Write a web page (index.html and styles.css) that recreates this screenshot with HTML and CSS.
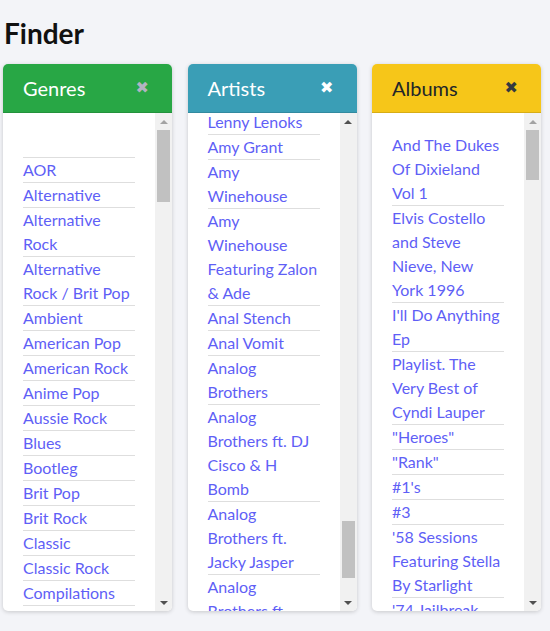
FILE: index.html
```html
<!DOCTYPE html>
<html lang="en">
<head>
<meta charset="utf-8">
<title>Finder</title>
<link rel="stylesheet" href="styles.css">
</head>
<body>
<main class="page">
  <h1 class="title">Finder</h1>
  <div class="columns">
    <section class="panel">
      <header class="panel-head head-green">
        <h2 class="panel-title">Genres</h2>
        <button class="close close-gray" type="button">✖</button>
      </header>
      <div class="panel-body">
        <ul class="list" id="genres">
          <li class="item"><a class="link" href="#"></a></li>
          <li class="item"><a class="link" href="#">AOR</a></li>
          <li class="item"><a class="link" href="#">Alternative</a></li>
          <li class="item"><a class="link" href="#">Alternative Rock</a></li>
          <li class="item"><a class="link" href="#">Alternative Rock / Brit Pop</a></li>
          <li class="item"><a class="link" href="#">Ambient</a></li>
          <li class="item"><a class="link" href="#">American Pop</a></li>
          <li class="item"><a class="link" href="#">American Rock</a></li>
          <li class="item"><a class="link" href="#">Anime Pop</a></li>
          <li class="item"><a class="link" href="#">Aussie Rock</a></li>
          <li class="item"><a class="link" href="#">Blues</a></li>
          <li class="item"><a class="link" href="#">Bootleg</a></li>
          <li class="item"><a class="link" href="#">Brit Pop</a></li>
          <li class="item"><a class="link" href="#">Brit Rock</a></li>
          <li class="item"><a class="link" href="#">Classic</a></li>
          <li class="item"><a class="link" href="#">Classic Rock</a></li>
          <li class="item"><a class="link" href="#">Compilations</a></li>
          <li class="item"><a class="link" href="#">Country</a></li>
        </ul>
        <div class="scrollbar">
          <span class="sb-btn sb-up sb-off"></span>
          <div class="sb-track"><div class="sb-thumb" style="height:72px"></div></div>
          <span class="sb-btn sb-down"></span>
        </div>
      </div>
    </section>
    <section class="panel">
      <header class="panel-head head-teal">
        <h2 class="panel-title">Artists</h2>
        <button class="close close-white" type="button">✖</button>
      </header>
      <div class="panel-body">
        <ul class="list" id="artists">
          <li class="item" id="anchor"><a class="link" href="#">Lenny Lenoks</a></li>
          <li class="item"><a class="link" href="#">Amy Grant</a></li>
          <li class="item"><a class="link" href="#">Amy Winehouse</a></li>
          <li class="item"><a class="link" href="#">Amy Winehouse Featuring Zalon &amp; Ade</a></li>
          <li class="item"><a class="link" href="#">Anal Stench</a></li>
          <li class="item"><a class="link" href="#">Anal Vomit</a></li>
          <li class="item"><a class="link" href="#">Analog Brothers</a></li>
          <li class="item"><a class="link" href="#">Analog Brothers ft. DJ Cisco &amp; H Bomb</a></li>
          <li class="item"><a class="link" href="#">Analog Brothers ft. Jacky Jasper</a></li>
          <li class="item"><a class="link" href="#">Analog Brothers ft. Kool Keith</a></li>
        </ul>
        <div class="scrollbar">
          <span class="sb-btn sb-up"></span>
          <div class="sb-track"><div class="sb-thumb" style="height:57px;margin-top:391px"></div></div>
          <span class="sb-btn sb-down"></span>
        </div>
      </div>
    </section>
    <section class="panel">
      <header class="panel-head head-yellow">
        <h2 class="panel-title">Albums</h2>
        <button class="close close-dark" type="button">✖</button>
      </header>
      <div class="panel-body">
        <ul class="list" id="albums">
          <li class="item"><a class="link" href="#">And The Dukes Of Dixieland Vol 1</a></li>
          <li class="item"><a class="link" href="#">Elvis Costello and Steve Nieve, New York 1996</a></li>
          <li class="item"><a class="link" href="#">I'll Do Anything Ep</a></li>
          <li class="item"><a class="link" href="#">Playlist. The Very Best of Cyndi Lauper</a></li>
          <li class="item"><a class="link" href="#">"Heroes"</a></li>
          <li class="item"><a class="link" href="#">"Rank"</a></li>
          <li class="item"><a class="link" href="#">#1's</a></li>
          <li class="item"><a class="link" href="#">#3</a></li>
          <li class="item"><a class="link" href="#">'58 Sessions Featuring Stella By Starlight</a></li>
          <li class="item"><a class="link" href="#">'74 Jailbreak</a></li>
        </ul>
        <div class="scrollbar">
          <span class="sb-btn sb-up sb-off"></span>
          <div class="sb-track"><div class="sb-thumb" style="height:50px"></div></div>
          <span class="sb-btn sb-down"></span>
        </div>
      </div>
    </section>
  </div>
</main>
<script src="script.js"></script>
</body>
</html>
```
FILE: styles.css
```css
* { box-sizing: border-box; }

html, body {
  margin: 0;
  background: #f3f4f8;
}

body {
  font-family: Lato, "Liberation Sans", sans-serif;
  font-size: 16px;
  line-height: 24px;
  color: #212529;
}

.page {
  padding: 0 3px 20px;
}

.title {
  margin: 16px 0 14px 1px;
  font-size: 28px;
  line-height: 34px;
  font-weight: 700;
  color: #111;
}

.columns {
  display: grid;
  grid-template-columns: repeat(3, 169px);
  column-gap: 15.5px;
}

.panel {
  background: #fff;
  border-radius: 5px;
  overflow: hidden;
  box-shadow: 0 1px 4px rgba(0, 0, 0, 0.18);
}

.panel-head {
  display: flex;
  align-items: center;
  justify-content: space-between;
  padding: 12px 23px 12px 20px;
  border-bottom: 1px solid rgba(0, 0, 0, 0.125);
}

.head-green { background: #28a745; color: #fff; }
.head-teal { background: #3a9eb6; color: #fff; }
.head-yellow { background: #f6c619; color: #212529; }

.panel-title {
  margin: 0;
  font-size: 20px;
  line-height: 24px;
  font-weight: 400;
}

.close {
  background: none;
  border: 0;
  padding: 0;
  font-family: "DejaVu Sans", sans-serif;
  font-size: 16px;
  line-height: 24px;
  cursor: pointer;
}

.close-gray { color: #b3b3c2; }
.close-white { color: #fff; }
.close-dark { color: #343a40; }

.panel-body {
  display: flex;
  height: 498px;
}

.list {
  flex: 1;
  min-width: 0;
  list-style: none;
  margin: 0;
  padding: 20px 20px 0;
  overflow-y: hidden;
}

.item {
  border-bottom: 1px solid #dedede;
}

.link {
  display: block;
  min-height: 24px;
  color: #5f5ff6;
  text-decoration: none;
}

.scrollbar {
  width: 17px;
  flex: none;
  display: flex;
  flex-direction: column;
  background: #f1f1f1;
}

.sb-btn {
  height: 17px;
  flex: none;
  display: flex;
  align-items: center;
  justify-content: center;
}

.sb-btn::before {
  content: "";
  width: 0;
  height: 0;
  border-left: 4px solid transparent;
  border-right: 4px solid transparent;
}

.sb-up::before { border-bottom: 4px solid #505050; }
.sb-down::before { border-top: 4px solid #505050; }
.sb-up.sb-off::before { border-bottom-color: #a3a3a3; }
.sb-down.sb-off::before { border-top-color: #a3a3a3; }

.sb-track {
  flex: 1;
  display: flex;
  flex-direction: column;
}

.sb-thumb {
  flex: none;
  margin-left: 2px;
  margin-right: 2px;
  background: #c1c1c1;
}
```
FILE: script.js
```js
var artists = document.getElementById("artists");
var anchor = document.getElementById("anchor");
artists.scrollTop = anchor.offsetTop - artists.offsetTop + 3;
```
